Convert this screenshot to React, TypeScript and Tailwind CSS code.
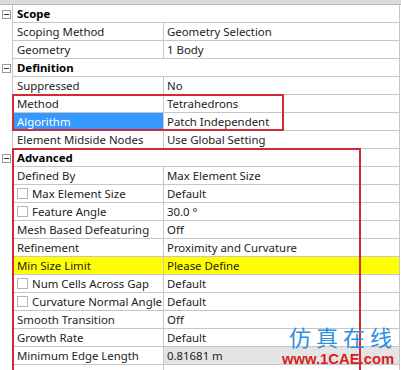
type Row =
  | { kind: "header"; label: string }
  | {
      kind: "prop";
      name: string;
      value: string;
      check?: boolean;
      tone?: "selected" | "warning";
      readOnly?: boolean;
    };

const rows: Row[] = [
  { kind: "header", label: "Scope" },
  { kind: "prop", name: "Scoping Method", value: "Geometry Selection" },
  { kind: "prop", name: "Geometry", value: "1 Body" },
  { kind: "header", label: "Definition" },
  { kind: "prop", name: "Suppressed", value: "No" },
  { kind: "prop", name: "Method", value: "Tetrahedrons" },
  { kind: "prop", name: "Algorithm", value: "Patch Independent", tone: "selected" },
  { kind: "prop", name: "Element Midside Nodes", value: "Use Global Setting" },
  { kind: "header", label: "Advanced" },
  { kind: "prop", name: "Defined By", value: "Max Element Size" },
  { kind: "prop", name: "Max Element Size", value: "Default", check: true },
  { kind: "prop", name: "Feature Angle", value: "30.0 °", check: true },
  { kind: "prop", name: "Mesh Based Defeaturing", value: "Off" },
  { kind: "prop", name: "Refinement", value: "Proximity and Curvature" },
  { kind: "prop", name: "Min Size Limit", value: "Please Define", tone: "warning" },
  { kind: "prop", name: "Num Cells Across Gap", value: "Default", check: true },
  { kind: "prop", name: "Curvature Normal Angle", value: "Default", check: true },
  { kind: "prop", name: "Smooth Transition", value: "Off" },
  { kind: "prop", name: "Growth Rate", value: "Default" },
  { kind: "prop", name: "Minimum Edge Length", value: "0.81681 m", readOnly: true },
  { kind: "prop", name: "Write ICEM CFD Files", value: "No" },
];

function MinusBox() {
  return (
    <span className="flex h-[9px] w-[9px] items-center justify-center border border-[#9a9a9a] bg-white">
      <span className="h-px w-[5px] bg-[#333]" />
    </span>
  );
}

function Checkbox() {
  return <span className="mr-[4px] h-[11px] w-[11px] shrink-0 border border-[#b4b4b4] bg-white" />;
}

function DetailRow({ row }: { row: Row }) {
  if (row.kind === "header") {
    return (
      <div className="flex h-[18px]">
        <div className="flex w-[13px] shrink-0 items-center justify-center border-r border-[#c6c6c6]">
          <MinusBox />
        </div>
        <div className="flex flex-1 items-center border-b border-[#c6c6c6] pl-[4px] font-bold text-black">
          {row.label}
        </div>
      </div>
    );
  }

  const nameBg =
    row.tone === "selected" ? "bg-[#3399ff] text-white" : row.tone === "warning" ? "bg-[#ffff00]" : "";
  const valueBg =
    row.tone === "warning" ? "bg-[#ffff00]" : row.readOnly ? "bg-[#e4e4e4]" : "";

  return (
    <div className="flex h-[18px]">
      <div className="w-[13px] shrink-0 border-r border-[#c6c6c6]" />
      <div className="flex flex-1 border-b border-[#c6c6c6]">
        <div
          className={`flex w-[151px] shrink-0 items-center overflow-hidden border-r border-[#c6c6c6] pl-[4px] ${nameBg}`}
        >
          {row.check && <Checkbox />}
          <span className="whitespace-nowrap">{row.name}</span>
        </div>
        <div className={`flex flex-1 items-center pl-[3px] ${valueBg}`}>
          <span className="whitespace-nowrap">{row.value}</span>
        </div>
      </div>
    </div>
  );
}

export default function App() {
  return (
    <div
      className="relative h-[370px] w-[401px] overflow-hidden bg-white text-[11.4px] leading-none text-[#222]"
      style={{ fontFamily: '"Noto Sans", "Open Sans", sans-serif' }}
    >
      <div className="h-[5px] border-b border-[#b8b8b8] bg-[#dcdcdc]" />
      <div className="mr-[1px] border-r border-[#c6c6c6]">
        {rows.map((row, i) => (
          <DetailRow key={i} row={row} />
        ))}
      </div>

      {/* highlight boxes */}
      <div className="absolute left-[12px] top-[94px] h-[37px] w-[272px] border-2 border-[#d42a35]" />
      <div className="absolute left-[12px] top-[148px] h-[240px] w-[349px] border-2 border-[#d42a35]" />

      {/* watermark */}
      <div
        className="absolute left-[289px] top-[325px] whitespace-nowrap text-[22px] leading-none tracking-[5px] text-[#2f8ee0]"
        style={{ fontFamily: '"Noto Sans CJK SC", sans-serif' }}
      >
        仿真在线
      </div>
      <div
        className="absolute left-[282px] top-[352px] whitespace-nowrap text-[14.8px] font-bold leading-none text-[#d61f1f]"
        style={{ fontFamily: '"Liberation Sans", Arial, sans-serif' }}
      >
        www.1CAE.com
      </div>
    </div>
  );
}
